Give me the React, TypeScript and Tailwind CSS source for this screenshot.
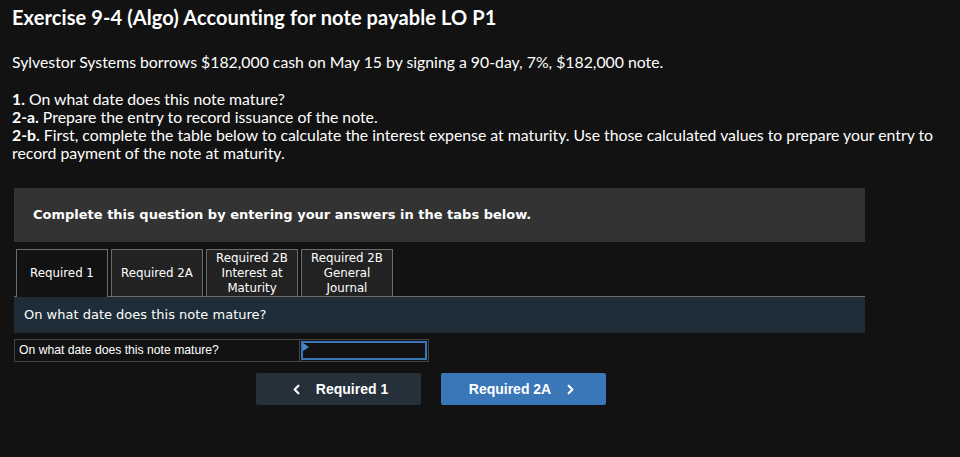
import React from 'react'
import { ChevronLeft, ChevronRight } from 'lucide-react'

const tabs = [
  ['Required 1'],
  ['Required 2A'],
  ['Required 2B', 'Interest at', 'Maturity'],
  ['Required 2B', 'General', 'Journal'],
]

export default function App() {
  return (
    <div className="min-h-[457px] w-[960px] bg-[#121212] text-white overflow-hidden">
      <div className="px-[12px] pt-[5px] font-['Lato','Noto_Sans',sans-serif]">
        <h1 className="text-[20px] leading-[24px] font-bold tracking-[0.1px]">
          Exercise 9-4 (Algo) Accounting for note payable LO P1
        </h1>
        <p className="mt-[24px] text-[15.8px] leading-[18px]">
          Sylvestor Systems borrows $182,000 cash on May 15 by signing a 90-day, 7%, $182,000 note.
        </p>
        <div className="mt-[19px] text-[15.8px] leading-[18px] pr-[10px]">
          <p>
            <b>1.</b> On what date does this note mature?
          </p>
          <p>
            <b>2-a.</b> Prepare the entry to record issuance of the note.
          </p>
          <p>
            <b>2-b.</b> First, complete the table below to calculate the interest expense at maturity. Use those
            calculated values to prepare your entry to record payment of the note at maturity.
          </p>
        </div>
      </div>

      <div className="ml-[14px] mt-[26px] w-[851px]">
        <div className="h-[54px] bg-[#333333] flex items-center pl-[19px] font-['DejaVu_Sans',sans-serif] text-[13px] font-bold">
          Complete this question by entering your answers in the tabs below.
        </div>

        {/* tabs */}
        <div className="mt-[7px] flex gap-[3px] pl-[2px] border-b border-[#6b6b6b] font-['DejaVu_Sans',sans-serif] text-[11.8px] leading-[15px]">
          {tabs.map((t, i) => (
            <div
              key={i}
              className={`w-[92px] h-[47px] flex flex-col items-center justify-center border border-[#6b6b6b] border-b-0 text-center ${
                i === 0 ? 'bg-[#121212] -mb-px h-[48px]' : 'bg-[#222222]'
              }`}
            >
              {t.map((line) => (
                <span key={line}>{line}</span>
              ))}
            </div>
          ))}
        </div>

        <div className="h-[36px] bg-[#1e2d38] flex items-center pl-[10px] font-['DejaVu_Sans',sans-serif] text-[13px]">
          On what date does this note mature?
        </div>

        {/* answer row */}
        <div className="mt-[6px] flex h-[23px] w-[415px] border border-[#444444] font-['Liberation_Sans',Arial,sans-serif] text-[12.2px]">
          <div className="w-[285px] flex items-center pl-[4px] border-r border-[#444444]">
            On what date does this note mature?
          </div>
          <div className="relative flex-1 border-2 border-[#3a77b8] m-[1px] bg-[#121212]">
            <svg className="absolute left-0 top-0" width="6" height="8" viewBox="0 0 6 8">
              <path d="M0 0 L6 4 L0 8 Z" fill="#4a86cc" />
            </svg>
          </div>
        </div>

        {/* nav buttons */}
        <div className="mt-[11px] ml-[242px] flex gap-[20px] font-['Liberation_Sans',Arial,sans-serif] text-[14px] font-bold">
          <button className="w-[165px] h-[32px] rounded-[2px] bg-[#26303b] flex items-center justify-center gap-[12px]">
            <ChevronLeft size={15} strokeWidth={3.5} />
            <span>Required 1</span>
          </button>
          <button className="w-[165px] h-[32px] rounded-[2px] bg-[#3a77b8] flex items-center justify-center gap-[12px]">
            <span>Required 2A</span>
            <ChevronRight size={15} strokeWidth={3.5} />
          </button>
        </div>
      </div>
    </div>
  )
}
